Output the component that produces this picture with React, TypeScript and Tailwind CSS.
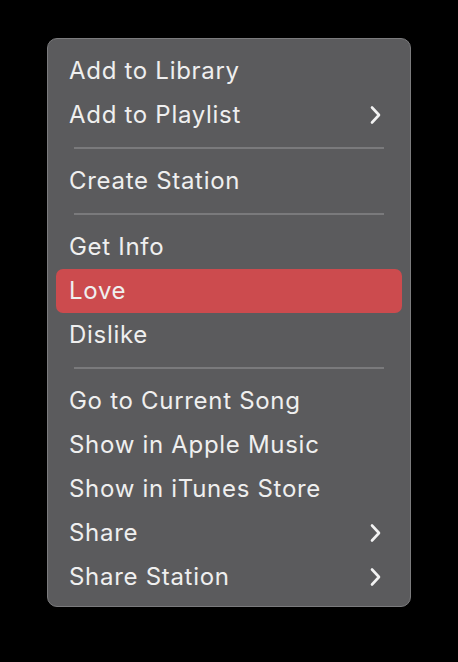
import React from 'react'

type Item = { label: string; sub?: boolean; active?: boolean } | 'sep'

const items: Item[] = [
  { label: 'Add to Library' },
  { label: 'Add to Playlist', sub: true },
  'sep',
  { label: 'Create Station' },
  'sep',
  { label: 'Get Info' },
  { label: 'Love', active: true },
  { label: 'Dislike' },
  'sep',
  { label: 'Go to Current Song' },
  { label: 'Show in Apple Music' },
  { label: 'Show in iTunes Store' },
  { label: 'Share', sub: true },
  { label: 'Share Station', sub: true },
]

const Chevron: React.FC = () => (
  <svg width="14" height="20" viewBox="0 0 14 20" fill="none">
    <path d="M3 2.5 L10 10 L3 17.5" stroke="#f2f2f2" strokeWidth="2.6" strokeLinecap="round" strokeLinejoin="round" />
  </svg>
)

const App: React.FC = () => {
  return (
    <div className="w-[458px] h-[662px] bg-black pt-[38px] pl-[47px]" style={{ fontFamily: 'Inter, "Noto Sans", sans-serif' }}>
      <div className="w-[364px] h-[569px] rounded-[10px] border border-[#7b7b7d] bg-[#5b5b5d] pt-[10px] px-[8px] flex flex-col">
        {items.map((it, i) =>
          it === 'sep' ? (
            <div key={i} className="h-[22px] flex items-center px-[18px]">
              <div className="h-[2px] w-full bg-[#7a7a7c]" />
            </div>
          ) : (
            <div
              key={i}
              className={
                'h-[44px] flex items-center justify-between pl-[13px] pr-[19px] rounded-[7px] ' +
                (it.active ? 'bg-[#cc4b4e]' : '')
              }
            >
              <span className="text-[24px] text-[#efefef] tracking-[0.7px]">{it.label}</span>
              {it.sub && <Chevron />}
            </div>
          )
        )}
      </div>
    </div>
  )
}

export default App
